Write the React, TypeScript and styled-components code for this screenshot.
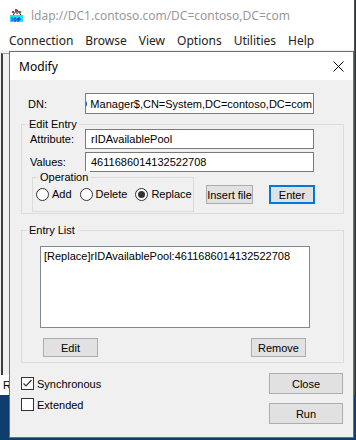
import styled, { createGlobalStyle } from 'styled-components';

const dlgFont = `Tahoma, "Liberation Sans", Arial, sans-serif`;
const uiFont = `"Segoe UI", "Noto Sans", sans-serif`;

const GlobalStyle = createGlobalStyle`
  html, body { margin: 0; padding: 0; }
  body { font-family: ${dlgFont}; background: #103c6e; }
`;

const Screen = styled.div`
  position: relative;
  width: 356px;
  height: 440px;
  overflow: hidden;
  background: #103c6e;
`;

/* ---- background ldp window ---- */

const AppWindow = styled.div`
  width: 355px;
  height: 395px;
  box-sizing: border-box;
  border-right: 1px solid #4d4d4d;
  background: #fff;
  display: flex;
  flex-direction: column;
`;

const TitleBar = styled.div`
  height: 30px;
  flex: none;
  display: flex;
  align-items: center;
  gap: 7px;
  padding-left: 10px;
  font: 12px ${uiFont};
  color: #999;
`;

const MenuBar = styled.div`
  height: 20px;
  flex: none;
  display: flex;
  align-items: center;
  padding-left: 3px;
  font: 12px ${uiFont};
  color: #222;
`;

const MenuItem = styled.span`
  padding: 0 6px;
`;

const AppBody = styled.div`
  flex: 1;
  display: flex;
  flex-direction: column;
  background: #f0f0f0;
  padding-top: 3px;
`;

const TreePane = styled.div`
  flex: 1;
  margin-left: 1px;
  border-left: 2px solid #3f3f3f;
  border-top: 1px solid #a0a0a0;
`;

const StatusBar = styled.div`
  height: 20px;
  line-height: 20px;
  padding-left: 3px;
  background: #fff;
  font-size: 11px;
  color: #000;
`;

/* ---- Modify dialog ---- */

const Dialog = styled.div`
  position: absolute;
  left: 9px;
  top: 51px;
  width: 345px;
  height: 387px;
  box-sizing: border-box;
  border: 1px solid #2b7fd6;
  background: #f0f0f0;
  display: flex;
  flex-direction: column;
`;

const DialogTitle = styled.div`
  height: 28px;
  flex: none;
  display: flex;
  align-items: center;
  justify-content: space-between;
  padding: 0 9px;
  background: #fff;
  font: 12px ${uiFont};
  color: #000;
`;

const DialogBody = styled.div`
  flex: 1;
  padding: 0 9px 0 11px;
  font: 11px ${dlgFont};
  color: #000;
`;

const FieldRow = styled.div<{ $pl: number; $mt: number }>`
  display: flex;
  align-items: center;
  padding-left: ${p => p.$pl}px;
  margin-top: ${p => p.$mt}px;
`;

const Label = styled.span<{ $w: number }>`
  width: ${p => p.$w}px;
  flex: none;
`;

const TextBox = styled.div<{ $h: number; $end?: boolean }>`
  width: 229px;
  height: ${p => p.$h}px;
  box-sizing: border-box;
  border: 1px solid #7a7a7a;
  background: #fff;
  padding: ${p => (p.$end ? '0 1px 0 0' : '0 5px')};
  display: flex;
  align-items: center;
  justify-content: ${p => (p.$end ? 'flex-end' : 'flex-start')};
  overflow: hidden;
  white-space: nowrap;
`;

const GroupBox = styled.div<{ $mt: number; $pb: number }>`
  border: 1px solid #dcdcdc;
  margin-top: ${p => p.$mt}px;
  padding-bottom: ${p => p.$pb}px;
`;

const GroupTitle = styled.div`
  width: max-content;
  line-height: 13px;
  margin: -7px 0 -2px 5px;
  padding: 0 2px;
  background: #f0f0f0;
`;

const OperationRow = styled.div`
  display: flex;
  align-items: center;
  margin-top: 5px;
`;

const OptionGroup = styled.div`
  width: 162px;
  height: 35px;
  box-sizing: border-box;
  margin-left: 10px;
  border: 1px solid #dcdcdc;
`;

const RadioRow = styled.div`
  display: flex;
  gap: 8px;
  padding-left: 3px;
  margin-top: 6px;
`;

const RadioItem = styled.label`
  display: flex;
  align-items: center;
  gap: 3px;
  line-height: 13px;
`;

const RadioCircle = styled.span<{ $on?: boolean }>`
  width: 13px;
  height: 13px;
  box-sizing: border-box;
  border: 1px solid #333;
  border-radius: 50%;
  background: #fff;
  display: grid;
  place-items: center;
  &::after {
    content: '';
    width: 7px;
    height: 7px;
    border-radius: 50%;
    background: ${p => (p.$on ? '#333' : 'transparent')};
  }
`;

const Button = styled.button<{ $w: number; $h: number; $default?: boolean }>`
  width: ${p => p.$w}px;
  height: ${p => p.$h}px;
  box-sizing: border-box;
  padding: 0;
  flex: none;
  border: ${p => (p.$default ? '2px solid #0078d7' : '1px solid #adadad')};
  background: #e1e1e1;
  font: 11px ${dlgFont};
  color: #000;
  display: flex;
  align-items: center;
  justify-content: center;
  overflow: hidden;
  white-space: nowrap;
`;

const SideButtons = styled.div`
  display: flex;
  gap: 16px;
  margin-left: 12px;
`;

const ListBox = styled.div`
  width: 270px;
  height: 82px;
  box-sizing: border-box;
  margin: 11px 0 0 18px;
  border: 1px solid #828790;
  background: #fff;
  padding: 2px 3px;
  line-height: 14px;
`;

const ListButtons = styled.div`
  display: flex;
  justify-content: space-between;
  margin-top: 10px;
  padding: 0 37px 0 21px;
`;

const BottomRow = styled.div`
  display: flex;
  justify-content: space-between;
  margin-top: 10px;
  padding-right: 1px;
`;

const Column = styled.div<{ $gap: number }>`
  display: flex;
  flex-direction: column;
  gap: ${p => p.$gap}px;
`;

const CheckRow = styled.label`
  height: 21px;
  display: flex;
  align-items: center;
  gap: 3px;
`;

const CheckBox = styled.span`
  width: 13px;
  height: 13px;
  box-sizing: border-box;
  border: 1px solid #333;
  background: #fff;
  display: grid;
  place-items: center;
`;

const LdpIcon = () => (
  <svg width="14" height="14" viewBox="0 0 14 14">
    <path d="M3 7 L7 2 L11 7 M7 2 L7 6" stroke="#111" strokeWidth="1" fill="none" />
    <rect x="5" y="1" width="2" height="2" fill="#d22" />
    <rect x="9" y="3" width="2" height="2" fill="#1a1" />
    <rect x="2" y="3" width="2" height="2" fill="#d22" />
    <rect x="0" y="7" width="13" height="7" fill="#18e6f0" />
    <path d="M2 9 V13 M4 10 H6 V13 H4 Z M8 10 H10 V12 H8 Z M8 10 V14" stroke="#1633d8" strokeWidth="1" fill="none" />
  </svg>
);

const CloseGlyph = () => (
  <svg width="11" height="11" viewBox="0 0 11 11">
    <path d="M0.5 0.5 L10.5 10.5 M10.5 0.5 L0.5 10.5" stroke="#000" strokeWidth="1" />
  </svg>
);

const CheckGlyph = () => (
  <svg width="11" height="11" viewBox="0 0 11 11">
    <path d="M1.5 5.5 L4 8 L9.5 2" stroke="#333" strokeWidth="1.2" fill="none" />
  </svg>
);

const menus = ['Connection', 'Browse', 'View', 'Options', 'Utilities', 'Help'];

const App = () => (
  <Screen>
    <GlobalStyle />
    <AppWindow>
      <TitleBar>
        <LdpIcon />
        <span>ldap://DC1.contoso.com/DC=contoso,DC=com</span>
      </TitleBar>
      <MenuBar>
        {menus.map(m => <MenuItem key={m}>{m}</MenuItem>)}
      </MenuBar>
      <AppBody>
        <TreePane />
        <StatusBar>Ready</StatusBar>
      </AppBody>
    </AppWindow>

    <Dialog>
      <DialogTitle>
        <span>Modify</span>
        <CloseGlyph />
      </DialogTitle>
      <DialogBody>
        <FieldRow $pl={7} $mt={13}>
          <Label $w={57}>DN:</Label>
          <TextBox $h={21} $end>CN=RID Manager$,CN=System,DC=contoso,DC=com</TextBox>
        </FieldRow>

        <GroupBox $mt={10} $pb={1}>
          <GroupTitle>Edit Entry</GroupTitle>
          <FieldRow $pl={8} $mt={0}>
            <Label $w={55}>Attribute:</Label>
            <TextBox $h={20}>rIDAvailablePool</TextBox>
          </FieldRow>
          <FieldRow $pl={8} $mt={3}>
            <Label $w={55}>Values:</Label>
            <TextBox $h={20}>4611686014132522708</TextBox>
          </FieldRow>
          <OperationRow>
            <OptionGroup>
              <GroupTitle>Operation</GroupTitle>
              <RadioRow>
                <RadioItem><RadioCircle />Add</RadioItem>
                <RadioItem><RadioCircle />Delete</RadioItem>
                <RadioItem><RadioCircle $on />Replace</RadioItem>
              </RadioRow>
            </OptionGroup>
            <SideButtons>
              <Button $w={47} $h={19}>Insert file</Button>
              <Button $w={46} $h={19} $default>Enter</Button>
            </SideButtons>
          </OperationRow>
        </GroupBox>

        <GroupBox $mt={16} $pb={5}>
          <GroupTitle>Entry List</GroupTitle>
          <ListBox>[Replace]rIDAvailablePool:4611686014132522708</ListBox>
          <ListButtons>
            <Button $w={55} $h={19}>Edit</Button>
            <Button $w={55} $h={19}>Remove</Button>
          </ListButtons>
        </GroupBox>

        <BottomRow>
          <Column $gap={0}>
            <CheckRow><CheckBox><CheckGlyph /></CheckBox>Synchronous</CheckRow>
            <CheckRow><CheckBox />Extended</CheckRow>
          </Column>
          <Column $gap={9}>
            <Button $w={74} $h={21}>Close</Button>
            <Button $w={74} $h={21}>Run</Button>
          </Column>
        </BottomRow>
      </DialogBody>
    </Dialog>
  </Screen>
);

export default App;
